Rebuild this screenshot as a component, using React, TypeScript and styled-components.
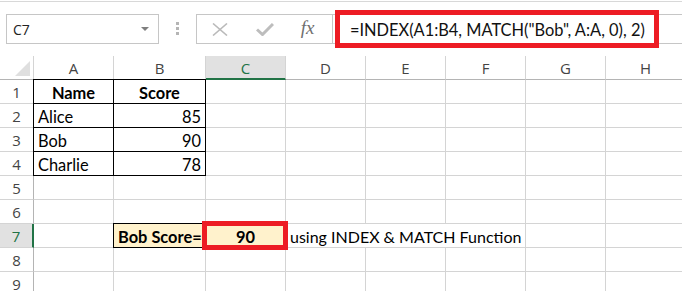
import React from 'react';
import styled, { createGlobalStyle, css } from 'styled-components';

const gridColor = '#d4d4d4';
const headerLine = '#b4b4b4';
const excelGreen = '#217346';
const markRed = '#ed1c24';
const paleYellow = '#fff2cc';

const GlobalStyle = createGlobalStyle`
  html, body {
    margin: 0;
    padding: 0;
    background: #ffffff;
  }
`;

const Window = styled.div`
  width: 682px;
  height: 291px;
  overflow: hidden;
  background: #ffffff;
`;

// formula bar
const FormulaBar = styled.div`
  box-sizing: border-box;
  display: flex;
  align-items: flex-start;
  height: 55px;
  margin-top: 1px;
  border-top: 1px solid #d8d8d8;
  padding: 12px 0 0 6px;
`;

const NameBox = styled.div`
  box-sizing: border-box;
  display: flex;
  align-items: center;
  justify-content: space-between;
  width: 153px;
  height: 30px;
  border: 1px solid #c6c6c6;
  padding: 0 9px 0 6px;
  font-family: 'Open Sans', sans-serif;
  font-size: 14px;
  color: #222;
`;

const Caret = styled.span`
  width: 0;
  height: 0;
  border-left: 4px solid transparent;
  border-right: 4px solid transparent;
  border-top: 4px solid #7f7f7f;
`;

const Grip = styled.div`
  display: flex;
  flex-direction: column;
  gap: 2px;
  margin: 8px 17px 0 17px;

  span {
    width: 3px;
    height: 3px;
    background: #b5b5b5;
  }
`;

const ButtonGroup = styled.div`
  box-sizing: border-box;
  display: flex;
  width: 137px;
  height: 30px;
  border: 1px solid #c6c6c6;
`;

const IconSlot = styled.div`
  display: flex;
  align-items: center;
  justify-content: center;
  width: 45px;
`;

const FxLabel = styled.span`
  font-family: 'Liberation Serif', serif;
  font-style: italic;
  font-size: 19px;
  color: #6f6f6f;
  margin: -2px 4px 0 0;
`;

const FormulaInput = styled.div`
  position: relative;
  box-sizing: border-box;
  flex: 1;
  display: flex;
  align-items: center;
  height: 30px;
  margin-left: -1px;
  margin-right: -4px;
  border: 1px solid #c6c6c6;
  padding-left: 17px;
  font-family: Lato, 'Liberation Sans', sans-serif;
  font-size: 16.4px;
  color: #111;
  white-space: nowrap;

  &::after {
    content: '';
    position: absolute;
    left: 2px;
    top: -5px;
    width: 324px;
    height: 38px;
    box-sizing: border-box;
    border: 5px solid ${markRed};
  }
`;

// sheet
const Sheet = styled.div`
  display: grid;
  grid-template-columns: 34px 80px 92px repeat(6, 80px);
  grid-auto-rows: 24px;
`;

const HeaderBase = css`
  box-sizing: border-box;
  display: flex;
  align-items: center;
  justify-content: center;
  font-family: 'Open Sans', sans-serif;
  font-size: 15px;
  color: #444;
`;

const Corner = styled.div`
  ${HeaderBase};
  align-items: flex-end;
  justify-content: flex-end;
  padding: 0 3px 3px 0;
  border-right: 1px solid ${gridColor};
  border-bottom: 1px solid ${headerLine};
`;

const CornerMark = styled.span`
  width: 0;
  height: 0;
  border-left: 15px solid transparent;
  border-bottom: 15px solid #dfdfdf;
`;

const ColHeader = styled.div<{ $selected?: boolean }>`
  ${HeaderBase};
  padding-top: 1px;
  border-right: 1px solid ${gridColor};
  border-bottom: 1px solid ${headerLine};
  ${(p) =>
    p.$selected &&
    css`
      background: #e1e1e1;
      color: ${excelGreen};
      border-bottom: 2px solid ${excelGreen};
    `}
`;

const RowHeader = styled.div<{ $selected?: boolean }>`
  ${HeaderBase};
  border-right: 1px solid ${headerLine};
  border-bottom: 1px solid ${gridColor};
  ${(p) =>
    p.$selected &&
    css`
      background: #e1e1e1;
      color: ${excelGreen};
      border-right: 2px solid ${excelGreen};
    `}
`;

type Align = 'left' | 'center' | 'right';

const justify: Record<Align, string> = {
  left: 'flex-start',
  center: 'center',
  right: 'flex-end',
};

const Cell = styled.div<{
  $align: Align;
  $bold?: boolean;
  $fill?: string;
  $boxed?: boolean;
  $span?: number;
  $marked?: boolean;
}>`
  box-sizing: border-box;
  display: flex;
  align-items: center;
  justify-content: ${(p) => justify[p.$align]};
  padding: 1px 4px 0;
  border-right: 1px solid ${gridColor};
  border-bottom: 1px solid ${gridColor};
  background: ${(p) => p.$fill || 'transparent'};
  font-family: Lato, 'Liberation Sans', sans-serif;
  font-size: 16.4px;
  font-weight: ${(p) => (p.$bold ? 700 : 400)};
  color: #000;
  white-space: nowrap;
  grid-column: span ${(p) => p.$span || 1};

  ${(p) =>
    (p.$boxed || p.$marked) &&
    css`
      position: relative;
    `}

  ${(p) =>
    p.$boxed &&
    css`
      &::before {
        content: '';
        position: absolute;
        top: -1px;
        left: -1px;
        right: -1px;
        bottom: -1px;
        border: 1px solid #000;
        pointer-events: none;
      }
    `}

  ${(p) =>
    p.$marked &&
    css`
      &::after {
        content: '';
        position: absolute;
        z-index: 1;
        top: -3px;
        left: -4px;
        right: -3px;
        bottom: -3px;
        border: 5px solid ${markRed};
        pointer-events: none;
      }
    `}
`;

// Lato caps run wider than Calibri, so the long note is set slightly smaller
const NoteText = styled.span`
  font-size: 16px;
`;

type CellSpec = {
  text?: React.ReactNode;
  align?: Align;
  bold?: boolean;
  fill?: string;
  boxed?: boolean;
  span?: number;
  marked?: boolean;
};

const columns = ['A', 'B', 'C', 'D', 'E', 'F', 'G', 'H'];
const selectedCol = 'C';
const selectedRow = 7;

const rows: CellSpec[][] = [
  [
    { text: 'Name', align: 'center', bold: true, boxed: true },
    { text: 'Score', align: 'center', bold: true, boxed: true },
  ],
  [{ text: 'Alice', boxed: true }, { text: '85', align: 'right', boxed: true }],
  [{ text: 'Bob', boxed: true }, { text: '90', align: 'right', boxed: true }],
  [{ text: 'Charlie', boxed: true }, { text: '78', align: 'right', boxed: true }],
  [],
  [],
  [
    {},
    { text: 'Bob Score=', bold: true, fill: paleYellow, boxed: true },
    { text: '90', align: 'center', bold: true, fill: paleYellow, marked: true },
    { text: <NoteText>using INDEX &amp; MATCH Function</NoteText>, span: 3 },
  ],
  [],
  [],
];

// pad each row out to column H
const fillRow = (cells: CellSpec[]) => {
  const out = [...cells];
  let used = out.reduce((n, c) => n + (c.span || 1), 0);
  while (used < columns.length) {
    out.push({});
    used++;
  }
  return out;
};

const CancelIcon = () => (
  <svg width="16" height="13" viewBox="0 0 16 13">
    <line x1="1" y1="0.5" x2="15" y2="12.5" stroke="#bababa" strokeWidth="1.6" />
    <line x1="15" y1="0.5" x2="1" y2="12.5" stroke="#bababa" strokeWidth="1.6" />
  </svg>
);

const EnterIcon = () => (
  <svg width="18" height="13" viewBox="0 0 18 13">
    <polyline points="1,6.5 6.5,11.5 17,1" fill="none" stroke="#bdbdbd" strokeWidth="3" />
  </svg>
);

const App = () => {
  return (
    <Window>
      <GlobalStyle />
      <FormulaBar>
        <NameBox>
          C7
          <Caret />
        </NameBox>
        <Grip>
          <span />
          <span />
          <span />
        </Grip>
        <ButtonGroup>
          <IconSlot>
            <CancelIcon />
          </IconSlot>
          <IconSlot>
            <EnterIcon />
          </IconSlot>
          <IconSlot>
            <FxLabel>fx</FxLabel>
          </IconSlot>
        </ButtonGroup>
        <FormulaInput>=INDEX(A1:B4, MATCH("Bob", A:A, 0), 2)</FormulaInput>
      </FormulaBar>

      <Sheet>
        <Corner>
          <CornerMark />
        </Corner>
        {columns.map((c) => (
          <ColHeader key={c} $selected={c === selectedCol}>
            {c}
          </ColHeader>
        ))}
        {rows.map((cells, i) => (
          <React.Fragment key={i}>
            <RowHeader $selected={i + 1 === selectedRow}>{i + 1}</RowHeader>
            {fillRow(cells).map((cell, j) => (
              <Cell
                key={j}
                $align={cell.align || 'left'}
                $bold={cell.bold}
                $fill={cell.fill}
                $boxed={cell.boxed}
                $span={cell.span}
                $marked={cell.marked}
              >
                {cell.text}
              </Cell>
            ))}
          </React.Fragment>
        ))}
      </Sheet>
    </Window>
  );
};

export default App;
